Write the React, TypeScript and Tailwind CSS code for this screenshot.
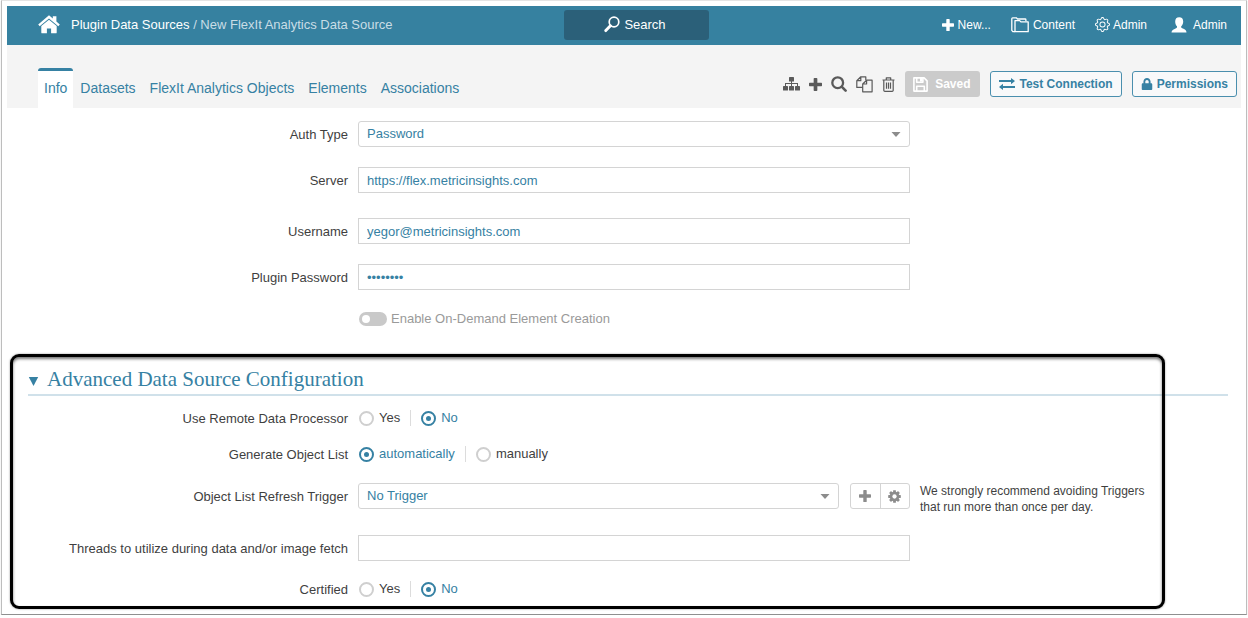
import React, { useState } from "react";
import { FaLock } from "react-icons/fa";
import { BsGear } from "react-icons/bs";

const HomeIcon = () => (
  <svg width="22" height="19" viewBox="0 0 22 19" fill="currentColor" aria-hidden="true">
    <path d="M11 .3 14.800 3.500V1.200h3.600v5.400l3.400 2.900-1.500 1.800L11 3.600 1.700 11.300.2 9.500z" />
    <path d="M11 4.700 3.300 11.100v6.300q0 .9.900.9h4.700v-4.900h4.200v4.900h4.700q.9 0 .9-.9v-6.300z" />
  </svg>
);

const HeaderSearchIcon = () => (
  <svg width="16" height="17" viewBox="0 0 16 17" fill="none" stroke="currentColor" aria-hidden="true">
    <circle cx="10" cy="6" r="4.800" strokeWidth="1.700" />
    <path d="M6.400 9.800 1.800 14.600" strokeWidth="2.900" strokeLinecap="round" />
  </svg>
);

const PlusIcon = ({ size }: { size: number }) => (
  <svg width={size} height={size} viewBox="0 0 12 12" fill="currentColor" aria-hidden="true">
    <path d="M5 0h2q.7 0 .7.600v3.700h3.700q.6 0 .6.700v2q0 .7-.6.700H7.700v3.700q0 .6-.7.600H5q-.7 0-.7-.6V7.700H.6Q0 7.700 0 7V5q0-.7.600-.7h3.700V.6Q4.300 0 5 0z" />
  </svg>
);

const FolderIcon = () => (
  <svg width="18" height="16" viewBox="0 0 18 16" fill="none" stroke="currentColor" strokeWidth="1.300" strokeLinejoin="round" aria-hidden="true">
    <path d="M4 14.700H2L.8 13.400V1.700q0-.9.900-.9h3.600l1.200 1.200h7.600q.8 0 .8.800v1.500" />
    <path d="M4 14.700V3.600h4.700l1.200 1.300h7.300v9.800z" />
  </svg>
);

const UserIcon = () => (
  <svg width="16" height="16" viewBox="0 0 16 16" fill="currentColor" aria-hidden="true">
    <path d="M8.200.3c2.600 0 4 1.600 4 4.100 0 2-.8 3.800-2 4.800v1.200c.3.900 5.300 1.400 5.300 5H.5c0-3.300 5.200-4 5.500-5V9.200C4.800 8.200 4.200 6.400 4.200 4.400 4.200 1.900 5.600.3 8.200.3z" />
  </svg>
);

const SitemapIcon = () => (
  <svg width="17" height="14" viewBox="0 0 17 14" fill="currentColor" aria-hidden="true">
    <rect x="6" y="0" width="5" height="4.600" rx=".6" />
    <rect x="0" y="9" width="5" height="4.600" rx=".6" />
    <rect x="6" y="9" width="5" height="4.600" rx=".6" />
    <rect x="12" y="9" width="5" height="4.600" rx=".6" />
    <path d="M8 4h1v5H8zM2 6h13v3h-1V7H3v2H2z" />
  </svg>
);

const SearchIcon = () => (
  <svg width="16" height="16" viewBox="0 0 16 16" fill="none" stroke="currentColor" aria-hidden="true">
    <circle cx="6.700" cy="6.700" r="5.400" strokeWidth="2.300" />
    <path d="m10.900 10.900 3.700 3.700" strokeWidth="2.600" strokeLinecap="round" />
  </svg>
);

const CopyIcon = () => (
  <svg width="17" height="17" viewBox="0 0 17 17" fill="none" stroke="currentColor" strokeWidth="1.200" strokeLinejoin="round" aria-hidden="true">
    <path d="M6.700 11.400H.8V4.700L4.800.8h5v3.400M4.800.8v3.900h-4" />
    <path d="M6.700 8 10.600 4.200h5.500v11.600H6.700zM10.600 4.200V8H6.700" />
  </svg>
);

const TrashIcon = () => (
  <svg width="13" height="15" viewBox="0 0 13 15" fill="none" stroke="currentColor" strokeWidth="1.200" strokeLinejoin="round" aria-hidden="true">
    <path d="M.5 3h12M4.300 2.800V.8h4.400v2M1.800 3.200v10.200q.1.900 1 .9h7.400q.9 0 1-.9V3.200" />
    <path d="M4.500 5.500v6.300M6.500 5.500v6.300M8.500 5.500v6.300" />
  </svg>
);

const SaveIcon = () => (
  <svg width="15" height="15" viewBox="0 0 15 15" fill="none" stroke="currentColor" strokeWidth="1.600" strokeLinejoin="round" aria-hidden="true">
    <path d="M.9.9h10.200l3 3v10.200H.9z" />
    <path d="M3.700 14V9.200h7.600V14M3.700 1v4.200h6.200V1" />
    <path d="M7 1h2.400v3.600H7z" fill="currentColor" stroke="none" />
  </svg>
);

const ExchangeIcon = () => (
  <svg width="16" height="12" viewBox="0 0 16 12" fill="currentColor" aria-hidden="true">
    <path d="M0 2.100h12V0l4 3.100-4 3.100V4.100H0zM16 9.900H4V12L0 8.900l4-3.100v2.100h12z" />
  </svg>
);

const CogIcon = () => (
  <svg width="13" height="13" viewBox="-7 -7 14 14" aria-hidden="true">
    <g fill="currentColor">
      <rect x="-1.500" y="-6.800" width="3" height="13.600" rx=".4" />
      <rect x="-1.500" y="-6.800" width="3" height="13.600" rx=".4" transform="rotate(45)" />
      <rect x="-1.500" y="-6.800" width="3" height="13.600" rx=".4" transform="rotate(90)" />
      <rect x="-1.500" y="-6.800" width="3" height="13.600" rx=".4" transform="rotate(135)" />
      <circle r="5.200" />
    </g>
    <circle r="2.300" fill="#fff" />
  </svg>
);

const rowClass =
  "grid grid-cols-[341fr_552fr_321fr] items-start gap-x-[10px]";
const inputClass =
  "h-[26px] w-full border border-[#d4d4d4] bg-white px-2 text-[#3681a3] outline-none";

function Row({ id, label, className, children, note }: {
  id: string;
  label: string;
  className?: string;
  children: React.ReactNode;
  note?: React.ReactNode;
}) {
  return (
    <div className={`${rowClass} ${className ?? ""}`}>
      <label htmlFor={id} className="h-[26px] text-right leading-7">{label}</label>
      {children}
      {note}
    </div>
  );
}

function Select({ id, options }: { id: string; options: string[] }) {
  return (
    <div className="relative min-w-0 flex-1">
      <select id={id} className="h-[26px] w-full appearance-none rounded-[3px] border border-[#d4d4d4] bg-white px-2 text-[#3681a3] outline-none">
        {options.map((o) => <option key={o}>{o}</option>)}
      </select>
      <svg className="pointer-events-none absolute top-[11px] right-[9px] text-[#8c8c8c]" width="10" height="5" viewBox="0 0 10 5" fill="currentColor" aria-hidden="true">
        <path d="M.5 0h9L5 5z" />
      </svg>
    </div>
  );
}

function RadioRow({ name, label, options, initial, className }: {
  name: string;
  label: string;
  options: string[];
  initial: string;
  className?: string;
}) {
  const [value, setValue] = useState(initial);
  return (
    <div role="radiogroup" aria-labelledby={`${name}-label`} className={`${rowClass} h-4 leading-[18px] ${className ?? ""}`}>
      <span id={`${name}-label`} className="text-right">{label}</span>
      <div className="flex h-4 items-center pl-px">
        {options.map((o, i) => (
          <React.Fragment key={o}>
            {i > 0 && <span className="mx-[10px] h-4 w-px bg-[#dcdcdc]" />}
            <label className="flex items-center gap-[5px] has-checked:text-[#3681a3]">
              <input
                type="radio"
                name={name}
                checked={value === o}
                onChange={() => setValue(o)}
                className="m-0 grid size-[15px] appearance-none place-items-center rounded-full border-2 border-[#cfcfcf] bg-white checked:border-[#3681a3] checked:before:size-[5px] checked:before:rounded-full checked:before:bg-[#3681a3] checked:before:content-['']"
              />
              {o}
            </label>
          </React.Fragment>
        ))}
      </div>
    </div>
  );
}

const tabs = ["Datasets", "FlexIt Analytics Objects", "Elements", "Associations"];

export default function App() {
  const [onDemand, setOnDemand] = useState(false);
  return (
    <div className="mx-px border border-t-[#e4e4e4] border-r-[#bdbdbd] border-b-[#8f8f8f] border-l-[#bdbdbd] bg-white p-[5px] font-['Liberation_Sans',Arial,sans-serif] text-[13px] leading-4 text-[#3f3f3f] shadow-[0_1px_1px_#d0d0d0]">
      <header className="grid h-[39px] grid-cols-[557fr_145px_532fr] items-center bg-[#3681a0] pb-[2px] text-white">
        <nav aria-label="Breadcrumb" className="flex items-center pl-[31px]">
          <a href="#home" aria-label="Home"><HomeIcon /></a>
          <a href="#sources" className="ml-[11px]">Plugin Data Sources</a>
          <span className="whitespace-pre text-[#c9dde6]"> / New FlexIt Analytics Data Source</span>
        </nav>
        <button type="button" className="flex h-[30px] items-center justify-center gap-1 rounded-[3px] bg-[#2b6079] pr-[3px]">
          <HeaderSearchIcon />
          Search
        </button>
        <nav aria-label="Account" className="flex items-center justify-end pr-[14px] text-[12px]">
          <a href="#new" className="flex items-center gap-1"><PlusIcon size={12} />New...</a>
          <a href="#content" className="ml-5 flex items-center gap-1"><FolderIcon />Content</a>
          <a href="#admin" className="ml-5 flex items-center gap-[3px]"><BsGear size={15} />Admin</a>
          <a href="#account" className="ml-6 flex items-center gap-[6px]"><UserIcon />Admin</a>
        </nav>
      </header>

      <div className="flex h-[63px] items-end justify-between bg-[#f4f4f4] pr-1 pl-[31px]">
        <nav aria-label="Sections" className="flex text-[14px] text-[#3681a3]">
          <a href="#info" aria-current="page" className="flex h-10 items-center rounded-t-[3px] border-t-3 border-[#3681a3] bg-white px-[6px] pb-1">Info</a>
          {tabs.map((t) => (
            <a key={t} href="#tab" className="flex h-10 items-center border-t-3 border-transparent px-[7px] pb-1">{t}</a>
          ))}
        </nav>
        <div className="mb-[11px] flex items-center text-[#5a5a5a]">
          <div className="flex items-center gap-[9px]">
            <button type="button" aria-label="Dependencies"><SitemapIcon /></button>
            <button type="button" aria-label="Add"><PlusIcon size={13} /></button>
            <button type="button" aria-label="Find"><SearchIcon /></button>
            <button type="button" aria-label="Duplicate"><CopyIcon /></button>
            <button type="button" aria-label="Delete"><TrashIcon /></button>
          </div>
          <div className="ml-[10px] flex gap-[10px] text-[12px] font-bold text-[#3681a3]">
            <button type="button" disabled className="flex h-[26px] items-center gap-[7px] rounded-[3px] bg-[#cbcbcb] pr-[9px] pl-2 text-white"><SaveIcon />Saved</button>
            <button type="button" className="flex h-[26px] items-center gap-[5px] rounded-[3px] border border-[#4a8fae] bg-[#f8f9fa] px-2"><ExchangeIcon />Test Connection</button>
            <button type="button" className="flex h-[26px] items-center gap-1 rounded-[3px] border border-[#4a8fae] bg-[#f8f9fa] px-2"><FaLock size={12} />Permissions</button>
          </div>
        </div>
      </div>

      <form>
        <Row id="auth" label="Auth Type" className="mt-[13px]">
          <Select id="auth" options={["Password", "Token"]} />
        </Row>
        <Row id="server" label="Server" className="mt-5">
          <input id="server" className={inputClass} defaultValue="https://flex.metricinsights.com" />
        </Row>
        <Row id="username" label="Username" className="mt-[25px]">
          <input id="username" className={inputClass} defaultValue="yegor@metricinsights.com" />
        </Row>
        <Row id="password" label="Plugin Password" className="mt-5">
          <input id="password" type="password" autoComplete="off" className={inputClass} defaultValue="password" />
        </Row>
        <div className={`${rowClass} mt-5`}>
          <label className="col-start-2 flex items-center gap-1 pl-px leading-[18px] text-[#9a9a9a]">
            <input
              type="checkbox"
              role="switch"
              checked={onDemand}
              onChange={(e) => setOnDemand(e.target.checked)}
              className="m-0 flex h-[14px] w-7 appearance-none items-center rounded-full bg-[#c9c9c9] px-[3px] before:size-2 before:rounded-full before:bg-white before:content-[''] checked:justify-end checked:bg-[#3681a3]"
            />
            Enable On-Demand Element Creation
          </label>
        </div>

        <section className="relative mt-[26px] pb-3">
          <h2 className="mr-[13px] ml-[21px] flex h-[42px] items-center border-b-2 border-[#d0e1ea] pt-[10px] font-['Liberation_Serif',serif] text-[21px] leading-6 text-[#3681a3]">
            <button type="button" className="flex items-center gap-2">
              <svg className="mt-1" width="11" height="9" viewBox="0 0 11 9" fill="currentColor" aria-hidden="true"><path d="M.8 0h9.400L5.500 9z" /></svg>
              Advanced Data Source Configuration
            </button>
          </h2>
          <RadioRow name="remote" label="Use Remote Data Processor" options={["Yes", "No"]} initial="No" className="mt-[14px]" />
          <RadioRow name="objects" label="Generate Object List" options={["automatically", "manually"]} initial="automatically" className="mt-5" />
          <Row
            id="trigger"
            label="Object List Refresh Trigger"
            className="mt-[21px]"
            note={
              <p className="max-w-[240px] text-[12px]">
                We strongly recommend avoiding Triggers that run more than once per day.
              </p>
            }
          >
            <div className="flex gap-[11px]">
              <Select id="trigger" options={["No Trigger"]} />
              <div className="flex h-[26px] w-[60px] divide-x divide-[#d4d4d4] rounded-[3px] border border-[#d4d4d4] text-[#8c8c8c]">
                <button type="button" aria-label="Add trigger" className="grid flex-1 place-items-center"><PlusIcon size={12} /></button>
                <button type="button" aria-label="Edit trigger" className="grid flex-1 place-items-center"><CogIcon /></button>
              </div>
            </div>
          </Row>
          <Row id="threads" label="Threads to utilize during data and/or image fetch" className="mt-5">
            <input id="threads" className={inputClass} />
          </Row>
          <RadioRow name="certified" label="Certified" options={["Yes", "No"]} initial="No" className="mt-5" />
          <div className="pointer-events-none absolute inset-y-0 right-[76px] left-[3px] rounded-[9px] border-3 border-black shadow-[0_0_2px_#888,inset_0_2px_3px_#777]" />
        </section>
      </form>
    </div>
  );
}
